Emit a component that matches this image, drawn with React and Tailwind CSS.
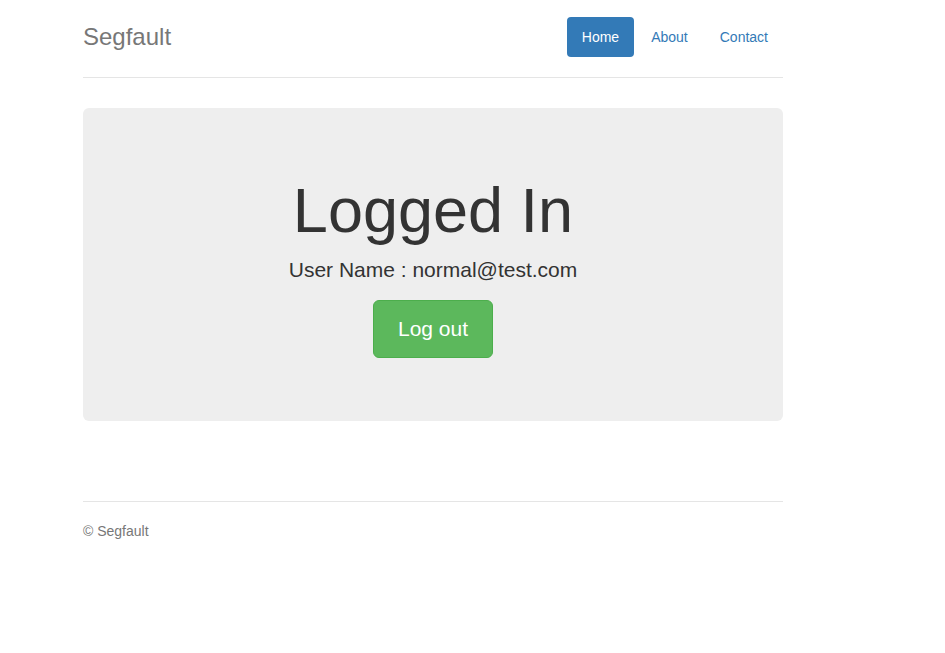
import React from 'react'

function App() {
  return (
    <div className="min-h-screen bg-white text-[#333] text-[14px] leading-[20px]" style={{ fontFamily: '"Liberation Sans", Arial, sans-serif' }}>
      <div className="w-[700px] ml-[83px] pt-[17px]">
        <div className="flex items-center justify-between pb-[20px] border-b border-[#e5e5e5]">
          <h3 className="text-[24px] leading-[40px] text-[#777] m-0">Segfault</h3>
          <ul className="flex">
            <li><a className="block px-[15px] py-[10px] rounded-[4px] bg-[#337ab7] text-white">Home</a></li>
            <li className="ml-[2px]"><a className="block px-[15px] py-[10px] rounded-[4px] text-[#337ab7]">About</a></li>
            <li className="ml-[2px]"><a className="block px-[15px] py-[10px] rounded-[4px] text-[#337ab7]">Contact</a></li>
          </ul>
        </div>

        <div className="mt-[30px] bg-[#eee] rounded-[6px] py-[48px] text-center">
          <h1 className="mt-[20px] mb-[10px] text-[63px] leading-[69px]">Logged In</h1>
          <p className="text-[21px] leading-[30px] mb-[15px]">User Name : normal@test.com</p>
          <p className="mb-[15px]">
            <button className="px-[24px] py-[14px] text-[21px] leading-[28px] text-white bg-[#5cb85c] border border-[#4cae4c] rounded-[6px]">Log out</button>
          </p>
        </div>

        <div className="mt-[80px] border-t border-[#e5e5e5] pt-[19px] text-[#777]">
          <p>© Segfault</p>
        </div>
      </div>
    </div>
  )
}

export default App
